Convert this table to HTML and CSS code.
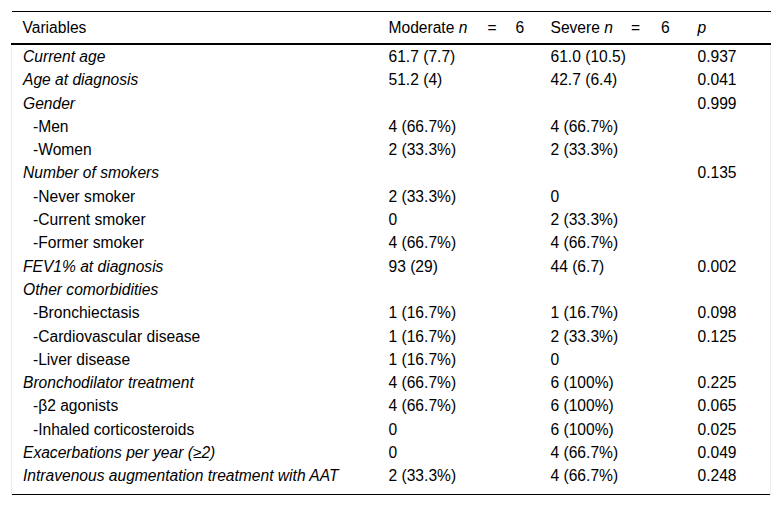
FILE: index.html
```html
<!DOCTYPE html>
<html lang="en">
<head>
<meta charset="utf-8">
<title>Table</title>
<link rel="stylesheet" href="styles.css">
</head>
<body>
<div class="wrap">
<table class="data">
<colgroup>
<col class="c1"><col class="c2"><col class="c3"><col class="c4">
</colgroup>
<thead>
<tr>
<th>Variables</th>
<th>Moderate <i>n</i><span class="eq eq-m">=</span>6</th>
<th>Severe <i>n</i><span class="eq eq-s">=</span>6</th>
<th><i>p</i></th>
</tr>
</thead>
<tbody>
<tr><td class="var">Current age</td><td>61.7 (7.7)</td><td>61.0 (10.5)</td><td>0.937</td></tr>
<tr><td class="var">Age at diagnosis</td><td>51.2 (4)</td><td>42.7 (6.4)</td><td>0.041</td></tr>
<tr><td class="var">Gender</td><td></td><td></td><td>0.999</td></tr>
<tr><td class="sub">-Men</td><td>4 (66.7%)</td><td>4 (66.7%)</td><td></td></tr>
<tr><td class="sub">-Women</td><td>2 (33.3%)</td><td>2 (33.3%)</td><td></td></tr>
<tr><td class="var">Number of smokers</td><td></td><td></td><td>0.135</td></tr>
<tr><td class="sub">-Never smoker</td><td>2 (33.3%)</td><td>0</td><td></td></tr>
<tr><td class="sub">-Current smoker</td><td>0</td><td>2 (33.3%)</td><td></td></tr>
<tr><td class="sub">-Former smoker</td><td>4 (66.7%)</td><td>4 (66.7%)</td><td></td></tr>
<tr><td class="var">FEV1% at diagnosis</td><td>93 (29)</td><td>44 (6.7)</td><td>0.002</td></tr>
<tr><td class="var">Other comorbidities</td><td></td><td></td><td></td></tr>
<tr><td class="sub">-Bronchiectasis</td><td>1 (16.7%)</td><td>1 (16.7%)</td><td>0.098</td></tr>
<tr><td class="sub">-Cardiovascular disease</td><td>1 (16.7%)</td><td>2 (33.3%)</td><td>0.125</td></tr>
<tr><td class="sub">-Liver disease</td><td>1 (16.7%)</td><td>0</td><td></td></tr>
<tr><td class="var">Bronchodilator treatment</td><td>4 (66.7%)</td><td>6 (100%)</td><td>0.225</td></tr>
<tr><td class="sub">-β2 agonists</td><td>4 (66.7%)</td><td>6 (100%)</td><td>0.065</td></tr>
<tr><td class="sub">-Inhaled corticosteroids</td><td>0</td><td>6 (100%)</td><td>0.025</td></tr>
<tr><td class="var">Exacerbations per year (≥2)</td><td>0</td><td>4 (66.7%)</td><td>0.049</td></tr>
<tr class="last"><td class="var">Intravenous augmentation treatment with AAT</td><td>2 (33.3%)</td><td>4 (66.7%)</td><td>0.248</td></tr>
</tbody>
</table>
</div>
</body>
</html>
```

FILE: styles.css
```css
html, body {
  margin: 0;
  padding: 0;
  background: #fff;
}

body {
  font-family: "Liberation Sans", Arial, sans-serif;
  font-size: 15.6px;
  color: #000;
}

.wrap {
  padding: 11px 11px 0 11px;
}

.data {
  width: 759px;
  border-collapse: collapse;
  table-layout: fixed;
  border-top: 1px solid #000;
  border-bottom: 1px solid #000;
}

.c1 { width: 366px; }
.c2 { width: 162px; }
.c3 { width: 147px; }
.c4 { width: 84px; }

.data th {
  font-weight: normal;
  text-align: left;
  padding: 5px 0 5px 11px;
  line-height: 21px;
  border-bottom: 2px solid #000;
  white-space: nowrap;
}

.data td {
  padding: 0 0 0 11px;
  line-height: 23.3px;
  white-space: nowrap;
  vertical-align: top;
}

.data tbody td:first-child {
  border-left: 1px solid #ececec;
}

.data tbody td:last-child {
  border-right: 1px solid #ececec;
}

.data tr.last td {
  padding-bottom: 6px;
}

.data td.var {
  font-style: italic;
}

.data td.sub {
  padding-left: 21px;
}

.eq-m {
  margin: 0 19px 0 20px;
}

.eq-s {
  margin: 0 21px 0 18px;
}
```
